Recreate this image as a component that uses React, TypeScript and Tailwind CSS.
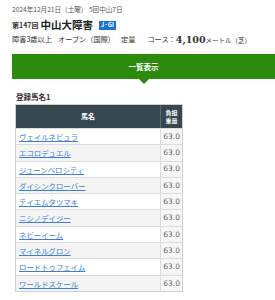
const horses = [
  "ヴェイルネビュラ",
  "エコロデュエル",
  "ジューンベロシティ",
  "ダイシンクローバー",
  "テイエムタツマキ",
  "ニシノデイジー",
  "ネビーイーム",
  "マイネルグロン",
  "ロードトゥフェイム",
  "ワールドスケール",
];

export default function App() {
  return (
    <div
      className="min-h-[300px] bg-white pl-[12px] pt-[4px] text-[#333]"
      style={{ fontFamily: '"Noto Sans CJK JP", "Noto Sans", sans-serif' }}
    >
      {/* race header */}
      <div className="h-[10px] text-[6.6px] leading-[10px] text-[#555]">
        2024年12月21日（土曜） 5回中山7日
      </div>
      <div className="mt-[4px] flex h-[14px] items-center">
        <span className="text-[7px] font-bold leading-none text-[#333]">第147回</span>
        <span className="ml-[2px] text-[10.5px] font-bold leading-none text-[#222]">中山大障害</span>
        <span className="ml-[6px] flex h-[9px] w-[17px] items-center justify-center bg-[#1b73d3] text-[6px] font-bold leading-none text-white">
          J·GI
        </span>
      </div>
      <div className="mt-[3px] flex h-[10px] items-center whitespace-nowrap text-[7.2px] leading-none text-[#333]">
        <span>障害3歳以上</span>
        <span className="ml-[6px]">オープン（国際）</span>
        <span className="ml-[6px]">定量</span>
        <span className="ml-[12px]">コース：</span>
        <span
          className="text-[9.5px] font-bold text-[#333]"
          style={{ fontFamily: '"DejaVu Serif", serif' }}
        >
          4,100
        </span>
        <span className="text-[6.5px]">メートル（芝）</span>
      </div>

      {/* list toggle */}
      <div className="relative mt-[9px] flex h-[25px] items-center justify-center bg-[#2c8a0d]">
        <span className="text-[7.5px] font-bold text-white">一覧表示</span>
        <span className="absolute left-1/2 top-full -translate-x-1/2 border-x-[5px] border-t-[5px] border-x-transparent border-t-[#2c8a0d]" />
      </div>

      <div className="mt-[13px] h-[10px] pl-[4px] text-[7.5px] font-bold leading-[10px] text-[#333]">
        登録馬名1
      </div>

      {/* entries */}
      <div className="ml-[3px] mt-[2px] w-[168px] border border-[#d0d0d0]">
        <div className="flex h-[23px] bg-[#36474f] text-white">
          <div className="flex flex-1 items-center justify-center border-r border-[#5b6a71] text-[7px] font-bold">
            馬名
          </div>
          <div className="flex w-[21px] flex-col items-center justify-center text-[6px] font-bold leading-[8px]">
            <span>負担</span>
            <span>重量</span>
          </div>
        </div>
        {horses.map((name, i) => (
          <div
            key={name}
            className={`flex h-[16.3px] border-t border-[#dcdcdc] ${i % 2 === 1 ? "bg-[#f4f4f4]" : "bg-white"}`}
          >
            <div className="flex flex-1 items-center border-r border-[#dcdcdc] pl-[3px]">
              <a className="text-[7.4px] leading-none text-[#3a7ed8] underline">{name}</a>
            </div>
            <div
              className="flex w-[21px] items-center justify-end bg-[#f6f6f6] pr-[2px] text-[7.5px] leading-none text-[#666]"
              style={{ fontFamily: '"DejaVu Sans", sans-serif' }}
            >
              63.0
            </div>
          </div>
        ))}
      </div>
    </div>
  );
}
